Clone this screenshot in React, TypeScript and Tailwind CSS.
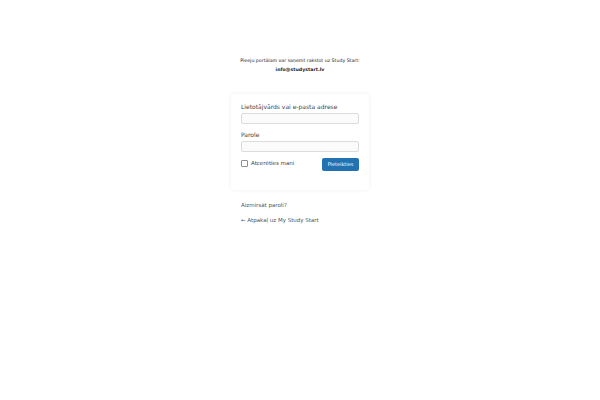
export default function App() {
  return (
    <div className="min-h-[400px] w-[600px] bg-white text-[#3c434a]" style={{ fontFamily: '"DejaVu Sans", sans-serif' }}>
      <div className="flex flex-col items-center pt-[56px]">
        <div className="text-center text-[4.7px] leading-[9px] text-[#1d2327]">
          <p>Pieeju portālam var saņemt rakstot uz Study Start:</p>
          <p className="font-bold">info@studystart.lv</p>
        </div>
        <form className="mt-[20px] w-[138px] rounded-[3px] bg-white px-[10px] pb-[19px] pt-[8px] shadow-[0_0_4px_rgba(0,0,0,0.07)]">
          <label className="block text-[6px] leading-[10px]">Lietotājvārds vai e-pasta adrese</label>
          <div className="mt-[1px] h-[11px] w-full rounded-[2px] border border-[#dcdcde] bg-[#fbfbfc]" />
          <label className="mt-[6px] block text-[6px] leading-[10px]">Parole</label>
          <div className="mt-[1px] h-[11px] w-full rounded-[2px] border border-[#dcdcde] bg-[#fbfbfc]" />
          <div className="mt-[6px] flex items-start justify-between">
            <div className="mt-[1px] flex items-center gap-[3px]">
              <span className="h-[7px] w-[7px] rounded-[1px] border border-[#8c8f94] bg-white" />
              <span className="text-[5.5px] leading-[8px]">Atcerēties mani</span>
            </div>
            <button type="button" className="flex h-[13px] w-[37px] items-center justify-center rounded-[2px] bg-[#2271b1] text-[5px] text-white">
              Pieteikties
            </button>
          </div>
        </form>
        <div className="mt-[11px] w-[118px] text-[5.5px] leading-[8px] text-[#50575e]">
          <p>Aizmirsāt paroli?</p>
          <p className="mt-[7px]">← Atpakaļ uz My Study Start</p>
        </div>
      </div>
    </div>
  );
}
